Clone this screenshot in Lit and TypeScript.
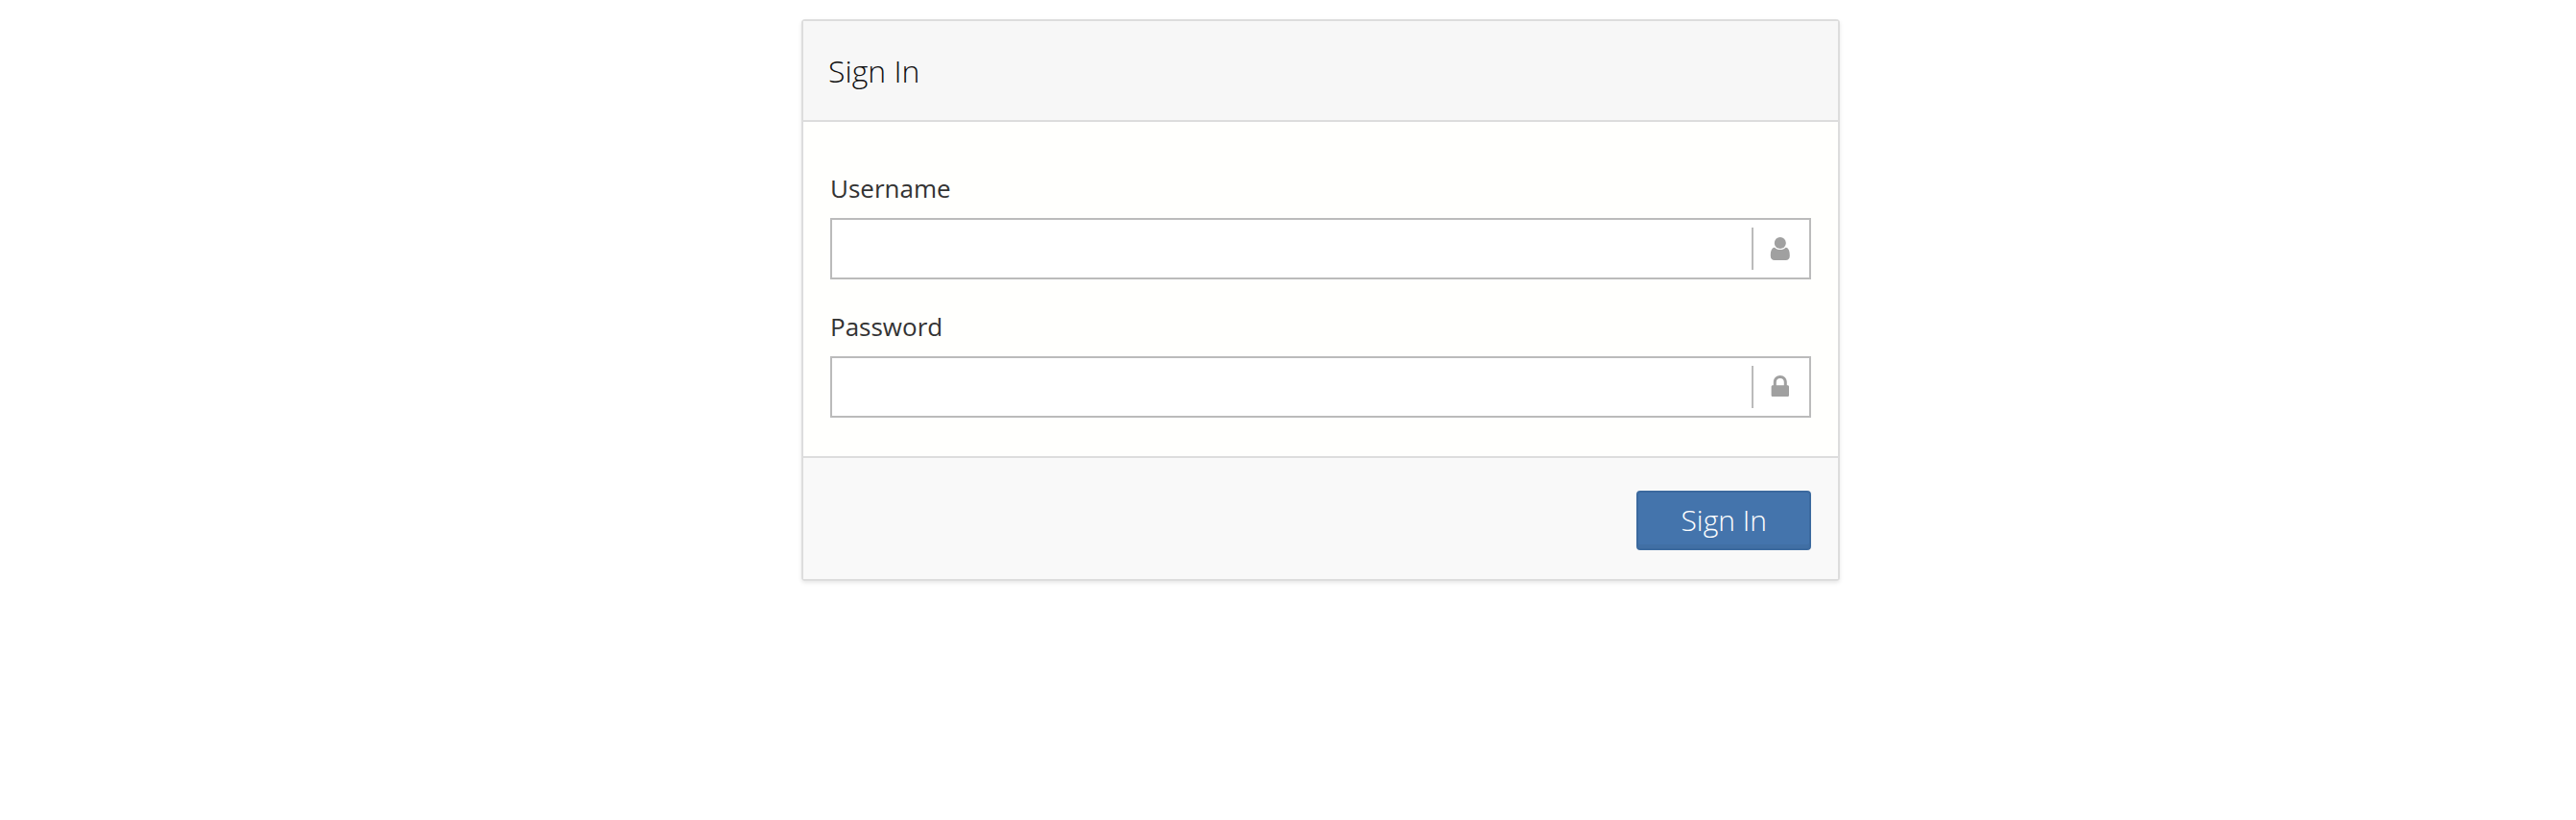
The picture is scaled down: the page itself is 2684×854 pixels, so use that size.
import { LitElement, html, css, svg } from "lit";
import { customElement } from "lit/decorators.js";

const userIcon = svg`
  <circle cx="11.8" cy="6" r="6"></circle>
  <path d="M6 10.8 C7.4 12.3 9.4 13.1 11.8 13.1 C14.2 13.1 16.2 12.3 17.6 10.8 C20.8 11.2 21.8 14.8 21.8 19.4 C21.8 22.2 20.2 24 17.6 24 H6 C3.4 24 1.8 22.2 1.8 19.4 C1.8 14.8 2.8 11.2 6 10.8 Z"></path>`;

const lockIcon = svg`
  <path fill-rule="evenodd" d="M4.8 10.2 V7 C4.8 3 7.8 0 11.8 0 C15.8 0 18.8 3 18.8 7 V10.2 H19.4 C20.4 10.2 21 10.8 21 11.8 V20.4 C21 21.4 20.4 22 19.4 22 H4.2 C3.2 22 2.6 21.4 2.6 20.4 V11.8 C2.6 10.8 3.2 10.2 4.2 10.2 Z M7.8 10.2 H15.8 V7 C15.8 4.6 14.2 3 11.8 3 C9.4 3 7.8 4.6 7.8 7 Z"></path>`;

@customElement("app-root")
export class AppRoot extends LitElement {
  static styles = css`
    :host {
      display: block;
      font-family: "Open Sans", "Noto Sans", sans-serif;
      color: #333;
    }
    * {
      box-sizing: border-box;
    }
    .page {
      display: flex;
      justify-content: center;
      padding: 20px 0 20px 68px;
    }
    .card {
      width: 100%;
      max-width: 1082px;
      border: 2px solid #ddd;
      border-radius: 4px;
      background: #fffffd;
      box-shadow: 0 2px 4px rgba(0, 0, 0, 0.1);
    }
    .header {
      padding: 30px 26px 29px;
      border-bottom: 2px solid #ddd;
      background: #f7f7f7;
    }
    .title {
      margin: 0;
      font-size: 32px;
      font-weight: 300;
      line-height: 44px;
      color: #111;
    }
    .fields {
      display: grid;
      gap: 31px;
      padding: 51px 28px 40px;
    }
    .label {
      display: block;
      margin-bottom: 13px;
      font-size: 26px;
      line-height: 36px;
    }
    .control {
      display: flex;
      align-items: center;
      height: 64px;
      border: 2px solid #bbb;
      background: #fff;
    }
    .control:focus-within {
      border-color: #4474ac;
    }
    .input {
      flex: 1;
      min-width: 0;
      height: 100%;
      padding: 0 16px;
      border: 0;
      outline: 0;
      background: transparent;
      color: inherit;
      font: inherit;
      font-size: 26px;
    }
    .addon {
      display: flex;
      align-items: center;
      justify-content: center;
      width: 60px;
      height: 44px;
      padding-right: 2px;
      border-left: 2px solid #bbb;
    }
    .icon {
      width: 24px;
      height: 24px;
      fill: #a0a0a0;
    }
    .footer {
      display: flex;
      justify-content: flex-end;
      padding: 34px 28px 30px;
      border-top: 2px solid #ddd;
      background: #f9f9f9;
    }
    .submit {
      height: 62px;
      padding: 0 44px;
      border: 2px solid #3b699e;
      border-radius: 4px;
      background: #4474ac;
      box-shadow: inset 0 -4px 0 #416fa4;
      color: #fff;
      font-family: inherit;
      font-size: 30px;
      font-weight: 300;
      line-height: 42px;
      cursor: pointer;
    }
  `;

  private field(id: string, label: string, type: string, icon: unknown) {
    return html`
      <div>
        <label class="label" for=${id}>${label}</label>
        <div class="control">
          <input class="input" id=${id} name=${id} type=${type} />
          <span class="addon">
            <svg class="icon" viewBox="0 0 24 24" aria-hidden="true">${icon}</svg>
          </span>
        </div>
      </div>
    `;
  }

  render() {
    return html`
      <main class="page">
        <form class="card" @submit=${(e: Event) => e.preventDefault()}>
          <header class="header"><h1 class="title">Sign In</h1></header>
          <div class="fields">
            ${this.field("username", "Username", "text", userIcon)}
            ${this.field("password", "Password", "password", lockIcon)}
          </div>
          <footer class="footer">
            <button class="submit" type="submit">Sign In</button>
          </footer>
        </form>
      </main>
    `;
  }
}
